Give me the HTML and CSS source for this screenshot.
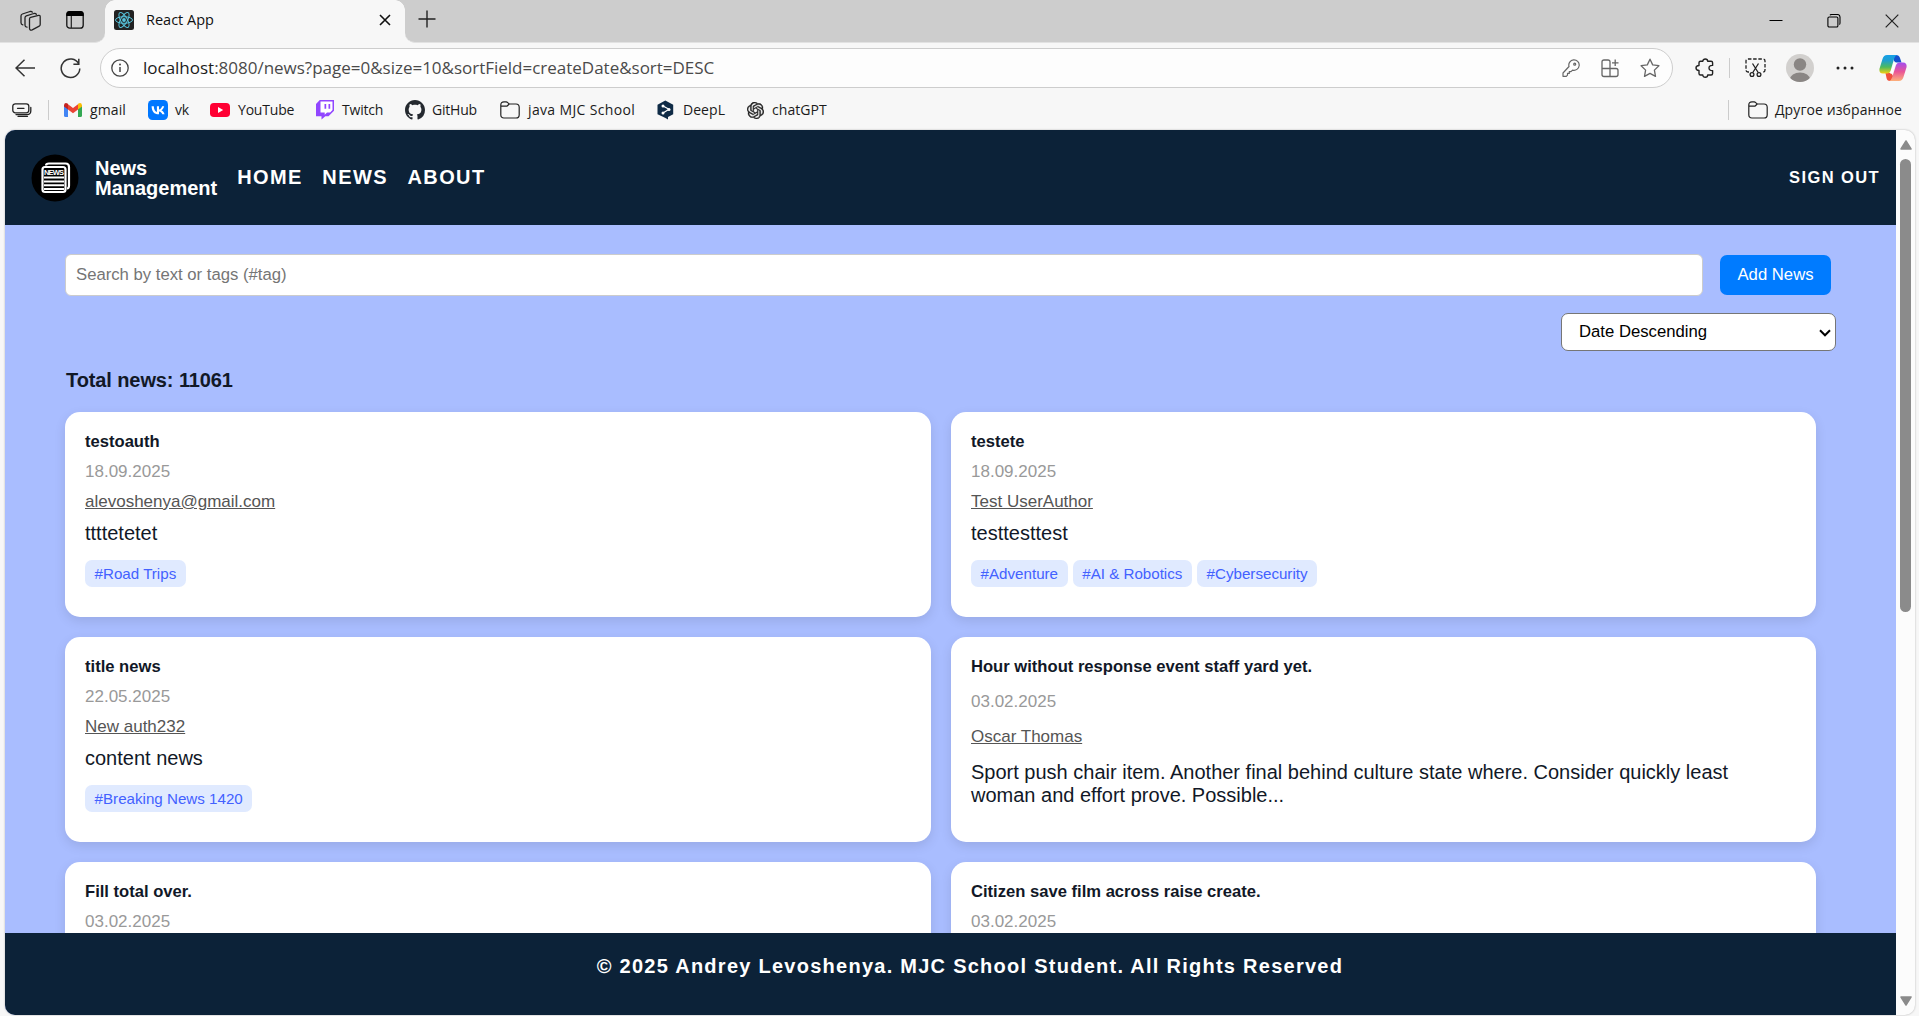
FILE: index.html
```html
<!DOCTYPE html>
<html lang="en">
<head>
<meta charset="utf-8">
<title>React App</title>
<link rel="stylesheet" href="styles.css">
</head>
<body>
<div class="browser">
  <div class="tabstrip">
    <div class="strip-left">
      <svg class="ic workspaces" width="22" height="22" viewBox="0 0 22 22"><g fill="none" stroke="#222" stroke-width="1.3" stroke-linejoin="round" stroke-linecap="round"><path d="M9.500 9q0-1.200 1.200-1.600l7.800-2q1.700-.3 1.700 1.300v7.800q0 1.200-1 1.700l-7 3.600q-2.700 1-2.700-1.500z"/><path d="M7 17.200q-2-.2-2-2V7.800q0-1.500 1.300-2l7.500-2.300q1.900-.4 2.600.8"/><path d="M2.800 14.800Q1 14.500 1 12.800V6Q1 4.500 2.400 4L10 1.500q1.600-.4 2.300.6"/></g></svg>
      <svg class="ic" width="18" height="18" viewBox="0 0 18 18"><rect x=".8" y=".8" width="16.400" height="16.400" rx="3" fill="none" stroke="#111" stroke-width="1.300"/><path d="M.3 5V3q0-3 3-3h11.400q3 0 3 3v2z" fill="#000"/><path d="M5.300 5v12" stroke="#222" stroke-width="1.200"/></svg>
    </div>
    <div class="tab">
      <svg class="favicon" width="20" height="20" viewBox="0 0 20 20"><rect width="20" height="20" rx="2.500" fill="#222"/><g fill="none" stroke="#58c4dc" stroke-width="1"><ellipse cx="10" cy="10" rx="8.500" ry="3.300"/><ellipse cx="10" cy="10" rx="8.500" ry="3.300" transform="rotate(60 10 10)"/><ellipse cx="10" cy="10" rx="8.500" ry="3.300" transform="rotate(120 10 10)"/></g><circle cx="10" cy="10" r="1.900" fill="#58c4dc"/></svg>
      <span class="ui tab-title">React App</span>
      <svg class="tab-close" width="12" height="12" viewBox="0 0 12 12"><path d="M1 1l10 10M11 1L1 11" stroke="#111" stroke-width="1.600"/></svg>
    </div>
    <svg class="newtab" width="18" height="18" viewBox="0 0 18 18"><path d="M9 .5v17M.5 9h17" stroke="#222" stroke-width="1.400"/></svg>
    <div class="window-buttons">
      <svg width="14" height="14" viewBox="0 0 14 14"><path d="M.5 6.500h13" stroke="#000"/></svg>
      <svg width="14" height="14" viewBox="0 0 14 14"><g fill="none" stroke="#000" stroke-width="1.100"><rect x=".9" y="3" width="10" height="10" rx="1.300"/><path d="M3 1.200q.5-.7 1.500-.7h6q2.500 0 2.500 2.500v6q0 1.300-.7 1.600"/></g></svg>
      <svg width="14" height="14" viewBox="0 0 14 14"><path d="M.7.700l12.600 12.600M13.300.7L.7 13.300" stroke="#222" stroke-width="1.200"/></svg>
    </div>
  </div>

  <div class="toolbar">
    <svg class="back" width="20" height="18" viewBox="0 0 20 18"><path d="M9.500.7L1 9l8.500 8.300M1 9h19" fill="none" stroke="#333" stroke-width="1.500"/></svg>
    <svg class="reload" width="21" height="21" viewBox="0 0 21 21"><path d="M18.800 6A9.300 9.300 0 1 0 19.800 10.500M18.800.8v5.400h-5.400" fill="none" stroke="#333" stroke-width="1.500"/></svg>
    <div class="address">
      <svg width="18" height="18" viewBox="0 0 18 18"><circle cx="9" cy="9" r="8.200" fill="none" stroke="#444" stroke-width="1.300"/><path d="M9 8v5" stroke="#444" stroke-width="1.500"/><circle cx="9" cy="5.500" r="1" fill="#444"/></svg>
      <span class="ui url"><span class="host">localhost</span>:8080/news?page=0&amp;size=10&amp;sortField=createDate&amp;sort=DESC</span>
      <svg class="key" width="18" height="18" viewBox="0 0 18 18"><g fill="none" stroke="#666" stroke-width="1.200" stroke-linejoin="round"><path d="M7 7.500a5.200 5.200 0 1 1 3.600 3.600L9 12.600H7.300v1.800H5.500v1.700L4.300 17.300H1V14z"/><circle cx="12.700" cy="5.200" r="1"/></g></svg>
      <svg class="apps" width="19" height="19" viewBox="0 0 19 19"><g fill="none" stroke="#666" stroke-width="1.300" stroke-linejoin="round"><path d="M9 9.500V3q0-2-2-2H3Q1 1 1 3v12.500q0 2 2 2h12q2 0 2-2v-4q0-2-2-2H1M9 9.500v8M14.200.5v6.500M11 3.800h6.500"/></g></svg>
      <svg class="star" width="20" height="20" viewBox="0 0 20 20"><path d="M10 1.200l2.700 5.700 6.200.8-4.500 4.400 1.100 6.300L10 15.400l-5.500 3 1.100-6.300L1.100 7.700l6.200-.8z" fill="none" stroke="#666" stroke-width="1.300" stroke-linejoin="round"/></svg>
    </div>
    <svg class="ext" width="20" height="20" viewBox="0 0 20 20"><path d="M5.500 3.200h2.300c0-3 4.900-3 4.900 0h3.400q1.500 0 1.500 1.500v2.700c-2.300-.2-3.600 1-3.600 2.600s1.300 2.800 3.600 2.600v2.900q0 1.500-1.500 1.500h-3.400c0 3-4.900 3-4.900 0H5.500q-1.500 0-1.500-1.500v-3c-4-.2-4-4.800 0-5V4.700q0-1.500 1.500-1.500z" fill="none" stroke="#222" stroke-width="1.400" stroke-linejoin="round"/></svg>
    <i class="divider"></i>
    <svg class="shot" width="21" height="20" viewBox="0 0 21 20"><g fill="none" stroke="#222" stroke-width="1.300"><path d="M4 14H3q-2 0-2-2V3q0-2 2-2h15q2 0 2 2v9q0 2-2 2h-1" stroke-dasharray="3.500 1.700"/><path d="M7.500 5.500l5.700 9M13.500 5.500l-5.700 9"/><circle cx="7" cy="16.500" r="1.900"/><circle cx="14" cy="16.500" r="1.900"/></g></svg>
    <svg class="avatar" width="28" height="28" viewBox="0 0 28 28"><defs><clipPath id="round"><circle cx="14" cy="14" r="14"/></clipPath></defs><g clip-path="url(#round)"><rect width="28" height="28" fill="#d2d0ce"/><circle cx="14" cy="10.500" r="6.200" fill="#8a8684"/><ellipse cx="14" cy="25.500" rx="10" ry="7" fill="#8a8684"/></g></svg>
    <svg class="dots" width="18" height="4" viewBox="0 0 18 4"><g fill="#222"><circle cx="2" cy="2" r="1.500"/><circle cx="9" cy="2" r="1.500"/><circle cx="16" cy="2" r="1.500"/></g></svg>
    <svg class="copilot" width="28" height="26" viewBox="0 0 28 26"><defs><linearGradient id="cl" x1="0" y1="0" x2="0" y2="1"><stop offset="0" stop-color="#16a0e8"/><stop offset=".3" stop-color="#1f9fd0"/><stop offset=".65" stop-color="#4cba5e"/><stop offset="1" stop-color="#f3d012"/></linearGradient><linearGradient id="cr" x1="0" y1="0" x2="0" y2="1"><stop offset="0" stop-color="#a24cf0"/><stop offset=".5" stop-color="#ea5596"/><stop offset="1" stop-color="#fdb07a"/></linearGradient></defs><path d="M14 0h3q3 0 4 3l1.500 4.500H17.500q-2 0-2.500-2z" fill="#1450ce"/><path d="M14 26h-3q-3 0-3.500-3L6.500 18H11q2 0 3 3z" fill="#f0503c"/><path d="M8 0h10q-2.200 1-3 4l-3.500 12q-.8 2.500-3.500 2.500H4Q0 18.500.4 14L3.500 4Q4.700 0 8 0z" fill="url(#cl)"/><path d="M20 26H10q2.500-1 3.300-4L17 10q.8-2.500 3.500-2.500H24q4 0 3.600 4.500L24.500 22q-1.200 4-4.500 4z" fill="url(#cr)"/><path d="M14.800 8.500h2L13.200 18.500h-2z" fill="#fff"/></svg>
  </div>

  <div class="bookmarks">
    <svg class="bm-tabs" width="20" height="14" viewBox="0 0 20 14"><g fill="none" stroke="#222" stroke-width="1.300" stroke-linecap="round"><rect x=".8" y=".8" width="16" height="9" rx="2.500"/><path d="M5.500 5.300h6.500M4 11.600h11q3.800 0 3.800-3.500V4.500M6 13.300h9.500"/></g></svg>
    <i class="divider bm-div"></i>
    <a class="bm b-gmail"><svg width="18" height="14" viewBox="0 0 18 14"><path d="M0 2v10.500Q0 14 1.500 14H4V5z" fill="#4285f4"/><path d="M14 5v9h2.500q1.500 0 1.500-1.500V2z" fill="#34a853"/><path d="M4 1.200l5 3.900 5-3.900v5.200L9 10.200 4 6.400z" fill="#ea4335"/><path d="M0 2.200Q.5-.8 3.500.5L4 1v5.500L0 3.500z" fill="#c5221f"/><path d="M18 2.200q-.5-3-3.500-1.700L14 1v5.500l4-3z" fill="#fbbc04"/></svg><span class="ui">gmail</span></a>
    <a class="bm b-vk"><svg width="20" height="20" viewBox="0 0 20 20"><rect width="20" height="20" rx="4.500" fill="#07f"/><path d="M10.700 14.300C6.200 14.300 3.700 11.300 3.600 6.200h2.200c.1 3.800 1.800 5.400 3.100 5.700V6.200H11v3.200c1.300-.1 2.600-1.600 3.100-3.200h2.100c-.4 1.900-1.800 3.400-2.800 4 1 .5 2.600 1.700 3.200 4.100h-2.300c-.5-1.500-1.700-2.700-3.300-2.900v2.900z" fill="#fff"/></svg><span class="ui">vk</span></a>
    <a class="bm b-youtube"><svg width="20" height="14" viewBox="0 0 20 14"><rect width="20" height="14" rx="3.800" fill="#ff0033"/><path d="M8 4l5.200 3L8 10z" fill="#fff"/></svg><span class="ui">YouTube</span></a>
    <a class="bm b-twitch"><svg width="18" height="20" viewBox="0 0 18 20"><path d="M3.800 0H18v10.800l-5.500 5.400H9.300L5.500 19.500v-3.300H0V4z" fill="#9146ff"/><path d="M4.500 1.400h12v8.500l-2.400 2.600H11l-2.300 2.200v-2.200H4.500z" fill="#fff"/><path d="M8.500 4h1.700v4.700H8.500zm4 0h1.700v4.700h-1.700z" fill="#9146ff"/></svg><span class="ui">Twitch</span></a>
    <a class="bm b-github"><svg width="20" height="20" viewBox="0 0 16 16"><path fill="#24292f" d="M8 0C3.580 0 0 3.580 0 8c0 3.540 2.290 6.530 5.470 7.590.4.070.55-.17.55-.38 0-.19-.01-.82-.01-1.490-2.010.37-2.530-.49-2.690-.94-.09-.23-.48-.94-.82-1.130-.28-.15-.68-.52-.01-.53.63-.01 1.080.58 1.230.82.72 1.210 1.870.87 2.330.66.07-.52.28-.87.51-1.070-1.780-.2-3.640-.89-3.640-3.950 0-.87.31-1.590.82-2.150-.08-.2-.36-1.020.08-2.120 0 0 .67-.21 2.200.82.64-.18 1.320-.27 2-.27s1.360.09 2 .27c1.530-1.040 2.200-.82 2.200-.82.44 1.100.16 1.920.08 2.120.51.56.82 1.270.82 2.150 0 3.070-1.870 3.750-3.650 3.950.29.25.54.73.54 1.480 0 1.070-.01 1.930-.01 2.200 0 .21.15.46.55.38A8.010 8.010 0 0 0 16 8c0-4.420-3.580-8-8-8z"/></svg><span class="ui">GitHub</span></a>
    <a class="bm b-java"><svg width="20" height="18" viewBox="0 0 20 18"><path d="M.8 4Q.8.800 4 .8h2.200q.8 0 1.500.8L9.200 3H16q3.200 0 3.200 3.200v7.500q0 3.300-3.200 3.300H4Q.8 17 .8 13.700zM.8 5.200h5.400q.8 0 1.500-.7L9.200 3" fill="none" stroke="#222" stroke-width="1.200"/></svg><span class="ui">java MJC School</span></a>
    <a class="bm b-deepl"><svg width="17" height="20" viewBox="0 0 17 20"><path d="M8.300.5l7.900 4.300v9.400L11 17v2.500l-3-1.800L.5 14.200V4.800z" fill="#0f2b46"/><path d="M6 6l6 3.300-6 3.700" fill="none" stroke="#fff" stroke-width="1.200"/><g fill="#fff"><circle cx="6" cy="6" r="1.500"/><circle cx="12" cy="9.400" r="1.500"/><circle cx="6" cy="13" r="1.500"/></g></svg><span class="ui">DeepL</span></a>
    <a class="bm b-gpt"><svg width="17" height="17" viewBox="0 0 24 24"><path fill="#222" stroke="#222" stroke-width=".5" d="M22.282 9.821a5.985 5.985 0 0 0-.516-4.910 6.046 6.046 0 0 0-6.510-2.900A6.065 6.065 0 0 0 4.981 4.182a5.985 5.985 0 0 0-3.998 2.900 6.046 6.046 0 0 0 .743 7.097 5.980 5.980 0 0 0 .511 4.911 6.051 6.051 0 0 0 6.515 2.900A5.985 5.985 0 0 0 13.260 24a6.056 6.056 0 0 0 5.772-4.206 5.990 5.990 0 0 0 3.998-2.900 6.056 6.056 0 0 0-.748-7.073zM13.260 22.430a4.476 4.476 0 0 1-2.876-1.041l.142-.080 4.778-2.758a.795.795 0 0 0 .393-.681v-6.737l2.020 1.169a.071.071 0 0 1 .038.052v5.583a4.504 4.504 0 0 1-4.495 4.493zM3.600 18.304a4.471 4.471 0 0 1-.535-3.014l.142.085 4.783 2.758a.771.771 0 0 0 .780 0l5.843-3.369v2.333a.080.080 0 0 1-.033.061L9.740 19.950a4.499 4.499 0 0 1-6.140-1.646zM2.341 7.896a4.485 4.485 0 0 1 2.365-1.973V11.600a.766.766 0 0 0 .388.677l5.815 3.354-2.020 1.169a.076.076 0 0 1-.071 0l-4.830-2.787A4.504 4.504 0 0 1 2.341 7.896zm16.596 3.856l-5.833-3.387L15.119 7.200a.076.076 0 0 1 .071 0l4.830 2.791a4.494 4.494 0 0 1-.676 8.105v-5.678a.790.790 0 0 0-.407-.666zm2.010-3.023l-.141-.085-4.774-2.782a.776.776 0 0 0-.785 0L9.409 9.230V6.897a.066.066 0 0 1 .028-.061l4.830-2.787a4.499 4.499 0 0 1 6.680 4.680zM8.307 12.863l-2.020-1.164a.080.080 0 0 1-.038-.057V6.075a4.499 4.499 0 0 1 7.376-3.454l-.142.081-4.778 2.758a.795.795 0 0 0-.393.681zm1.097-2.365l2.602-1.500 2.607 1.500v2.999l-2.597 1.500-2.607-1.500z"/></svg><span class="ui">chatGPT</span></a>
    <i class="divider right-div"></i>
    <a class="bm other"><svg width="20" height="18" viewBox="0 0 20 18"><path d="M.8 4Q.8.800 4 .8h2.200q.8 0 1.500.8L9.200 3H16q3.200 0 3.200 3.200v7.500q0 3.300-3.200 3.300H4Q.8 17 .8 13.700zM.8 5.200h5.400q.8 0 1.500-.7L9.200 3" fill="none" stroke="#222" stroke-width="1.200"/></svg><span class="ui">Другое избранное</span></a>
  </div>

  <div class="viewport">
    <div class="page">
      <header class="header">
        <svg class="logo" width="48" height="48" viewBox="0 0 48 48"><circle cx="24" cy="24" r="23.500" fill="#000"/><path d="M15 11.500Q15 9.500 18 9.500h16.500q3.500 0 3.500 3.500V31.500q0 3-2 3" fill="none" stroke="#fff" stroke-width="2.200"/><rect x="11.500" y="13" width="23" height="25" rx="2.500" fill="none" stroke="#fff" stroke-width="2.200"/><text class="logo-text" x="13" y="20.500" textLength="20">NEWS</text><path d="M13 23.500h20M13 27.500h20M13 31.200h20M13 35h20" stroke="#fff" stroke-width="2"/></svg>
        <div class="brand">News<br>Management</div>
        <nav class="nav"><a>HOME</a><a>NEWS</a><a>ABOUT</a></nav>
        <a class="signout">SIGN OUT</a>
      </header>
      <main class="main">
        <div class="search-row">
          <input class="search" type="text" placeholder="Search by text or tags (#tag)">
          <button class="add">Add News</button>
        </div>
        <div class="sort-row">
          <div class="select"><span>Date Descending</span><svg width="12" height="8" viewBox="0 0 12 8"><path d="M1 1.300l5 5 5-5" fill="none" stroke="#000" stroke-width="2"/></svg></div>
        </div>
        <h2 class="total">Total news: 11061</h2>
        <div class="cards">
          <article class="card"><h3>testoauth</h3><p class="date">18.09.2025</p><a class="author">alevoshenya@gmail.com</a><p class="text">ttttetetet</p><div class="tags"><span>#Road Trips</span></div></article>
          <article class="card"><h3>testete</h3><p class="date">18.09.2025</p><a class="author">Test UserAuthor</a><p class="text">testtesttest</p><div class="tags"><span>#Adventure</span><span>#AI &amp; Robotics</span><span>#Cybersecurity</span></div></article>
          <article class="card"><h3>title news</h3><p class="date">22.05.2025</p><a class="author">New auth232</a><p class="text">content news</p><div class="tags"><span>#Breaking News 1420</span></div></article>
          <article class="card loose"><h3>Hour without response event staff yard yet.</h3><p class="date">03.02.2025</p><a class="author">Oscar Thomas</a><p class="text">Sport push chair item. Another final behind culture state where. Consider quickly least woman and effort prove. Possible...</p></article>
          <article class="card"><h3>Fill total over.</h3><p class="date">03.02.2025</p></article>
          <article class="card"><h3>Citizen save film across raise create.</h3><p class="date">03.02.2025</p></article>
        </div>
      </main>
      <footer class="footer">© 2025 Andrey Levoshenya. MJC School Student. All Rights Reserved</footer>
    </div>
    <div class="scrollbar">
      <svg width="12" height="10" viewBox="0 0 12 10"><path d="M6 1l5 8H1z" fill="#8b8b8b" stroke="#8b8b8b" stroke-width="1.500" stroke-linejoin="round"/></svg>
      <div class="track"><div class="thumb"></div></div>
      <svg width="12" height="10" viewBox="0 0 12 10"><path d="M6 9l5-8H1z" fill="#8b8b8b" stroke="#8b8b8b" stroke-width="1.500" stroke-linejoin="round"/></svg>
    </div>
  </div>
</div>
</body>
</html>
```
FILE: styles.css
```css
* { box-sizing: border-box; }
html, body { margin: 0; height: 100%; overflow: hidden; }
body { font-family: "Liberation Sans", Arial, sans-serif; background: #f7f7f7; }
svg { display: block; flex: none; }
h2, h3, p { margin: 0; }

.browser { display: flex; flex-direction: column; width: 1919px; height: 1016px; background: #f7f7f7; }
.ui { font-family: "Open Sans", "Noto Sans", sans-serif; font-size: 15px; color: #1b1b1b; white-space: nowrap; line-height: 20px; }

.tabstrip { display: flex; height: 43px; background: #f7f7f7; flex: none; }
.strip-left { display: flex; width: 105px; height: 43px; padding: 10px 0 0 20px; gap: 23px; background: #cdcdcd; border-bottom: 1px solid #e2e2e2; border-bottom-right-radius: 10px; }
.strip-left .ic + .ic { margin-top: 1px; margin-left: 1px; }
.tab { position: relative; display: flex; align-items: center; width: 300px; height: 43px; padding: 0 14px 3px 9px; background: #f7f7f7; border-radius: 10px 10px 0 0; }
.tab::before, .tab::after { content: ""; position: absolute; top: 0; width: 10px; height: 10px; }
.tab::before { left: 0; background: radial-gradient(circle at 10px 10px, #f7f7f7 9.500px, #cdcdcd 10px); }
.tab::after { right: 0; background: radial-gradient(circle at 0 10px, #f7f7f7 9.500px, #cdcdcd 10px); }
.tab-title { flex: 1; margin-left: 12px; font-size: 14.500px; letter-spacing: 0; color: #111; }
.newtab { box-sizing: content-box; padding: 10px 0 14px 13px; background: #cdcdcd; border-bottom: 1px solid #e2e2e2; border-bottom-left-radius: 10px; }
.window-buttons { flex: 1; display: flex; justify-content: flex-end; gap: 44px; padding: 14px 20px 0 0; background: #cdcdcd; border-bottom: 1px solid #e2e2e2; }

.toolbar { display: flex; align-items: center; height: 50px; flex: none; padding-left: 15px; }
.back { margin-top: -1px; }
.reload { margin-left: 25px; }
.address { display: flex; align-items: center; width: 1573px; height: 40px; margin-left: 19px; padding: 0 12px 0 10px; border: 1px solid #cdcdcd; border-radius: 20px; background: #fdfdfd; }
.url { flex: 1; margin-left: 14px; font-size: 17px; color: #4a4a4a; letter-spacing: -.01px; }
.host { color: #1b1b1b; }
.apps { margin-left: 21px; }
.star { margin-left: 20px; }
.ext { margin-left: 22px; }
.divider { width: 1px; height: 20px; background: #ccc; flex: none; }
.ext + .divider { margin-left: 14px; }
.shot { margin-left: 15px; }
.avatar { margin-left: 20px; }
.dots { margin-left: 22px; }
.copilot { margin-left: 25px; }

.bookmarks { display: flex; align-items: center; height: 37px; flex: none; padding: 0 17px 3px 12px; }
.bm-div { margin: 0 15px 0 16px; }
.bm { display: flex; align-items: center; gap: 8px; flex: none; }
.bm .ui { font-size: 14px; letter-spacing: -.2px; }
.b-gmail { width: 84px; gap: 8px; }
.b-gmail .ui { letter-spacing: .1px; }
.b-vk { width: 62px; gap: 7px; }
.b-youtube { width: 106px; }
.b-twitch { width: 89px; }
.b-github { width: 95px; gap: 7px; }
.b-java { width: 157px; }
.b-java .ui { letter-spacing: .35px; }
.b-deepl { width: 90px; gap: 9px; }
.b-deepl .ui, .b-gpt .ui { letter-spacing: .05px; }
.right-div { margin-left: auto; }
.other { margin-left: 19px; gap: 7px; }
.other .ui { letter-spacing: .1px; }

.viewport { display: flex; width: 1910px; height: 885px; margin-left: 5px; border-radius: 10px; overflow: hidden; background: #fcfcfc; box-shadow: 0 0 2px #aaa; flex: none; }
.page { display: flex; flex-direction: column; width: 1891px; background: #a9bdff; }
.header { display: flex; align-items: center; height: 95px; flex: none; padding: 0 16px 0 26px; background: #0c2238; color: #fff; font-weight: 700; }
.logo-text { font: 700 7.500px "Liberation Sans", Arial, sans-serif; fill: #fff; }
.brand { margin-left: 16px; font-size: 20px; line-height: 20px; }
.nav { display: flex; gap: 19.500px; margin: 0 auto 1px 20px; font-size: 20px; letter-spacing: 1.400px; }
.signout { font-size: 16.500px; letter-spacing: 1.400px; }

.main { flex: 1; min-height: 0; overflow: hidden; padding: 29px 60px 0; color: #111827; }
.search-row { display: flex; align-items: center; gap: 17px; padding-right: 5px; }
.search { flex: 1; height: 42px; padding: 0 10px 1px; border: 1px solid #ccc; border-radius: 6px; font: 16.700px "Liberation Sans", Arial, sans-serif; background: #fff; }
.search::placeholder { color: #757575; }
.add { width: 111px; height: 40px; padding: 0; border: 0; border-radius: 7px; background: #007bff; color: #fff; font: 16.700px "Liberation Sans", Arial, sans-serif; }
.sort-row { display: flex; justify-content: flex-end; margin-top: 17px; }
.select { display: flex; align-items: center; justify-content: space-between; width: 275px; height: 38px; padding: 0 4px 1px 17px; border: 1px solid #767676; border-radius: 7px; background: #fff; color: #000; font-size: 16.700px; }
.select svg { margin-top: 3px; }
.total { margin: 17px 0 0 1px; font-size: 20px; line-height: 24px; letter-spacing: -.1px; }
.cards { display: grid; grid-template-columns: 866px 865px; grid-auto-rows: 205px; gap: 20px; margin-top: 20px; }
.card { display: flex; flex-direction: column; align-items: flex-start; padding: 21px 20px 0; border-radius: 15px; background: #fff; box-shadow: 0 4px 12px rgba(0, 0, 0, .1); }
.card h3 { font-size: 16.600px; line-height: 18px; }
.date { margin-top: 12px; font-size: 17px; line-height: 18px; color: #999; }
.author { margin-top: 12px; font-size: 17px; line-height: 18px; color: #555; text-decoration: underline; }
.text { margin-top: 11px; padding-right: 30px; font-size: 20px; line-height: 23px; }
.tags { display: flex; gap: 5px; margin-top: 15px; }
.tags span { height: 27px; padding: 0 9.600px; border-radius: 7px; background: #e0eaff; color: #4361ff; font-size: 15.150px; line-height: 27px; }
.loose .date, .loose .author { margin-top: 17px; }
.loose .text { margin-top: 15px; }

.footer { height: 82px; flex: none; padding-left: 39px; background: #0c2238; color: #fff; font-size: 20px; font-weight: 700; letter-spacing: 1.260px; line-height: 66px; text-align: center; }

.scrollbar { display: flex; flex-direction: column; align-items: center; width: 19px; padding: 10px 0 9px; }
.track { flex: 1; padding-top: 9px; }
.thumb { width: 11px; height: 453px; border-radius: 6px; background: #8b8b8b; }
```
